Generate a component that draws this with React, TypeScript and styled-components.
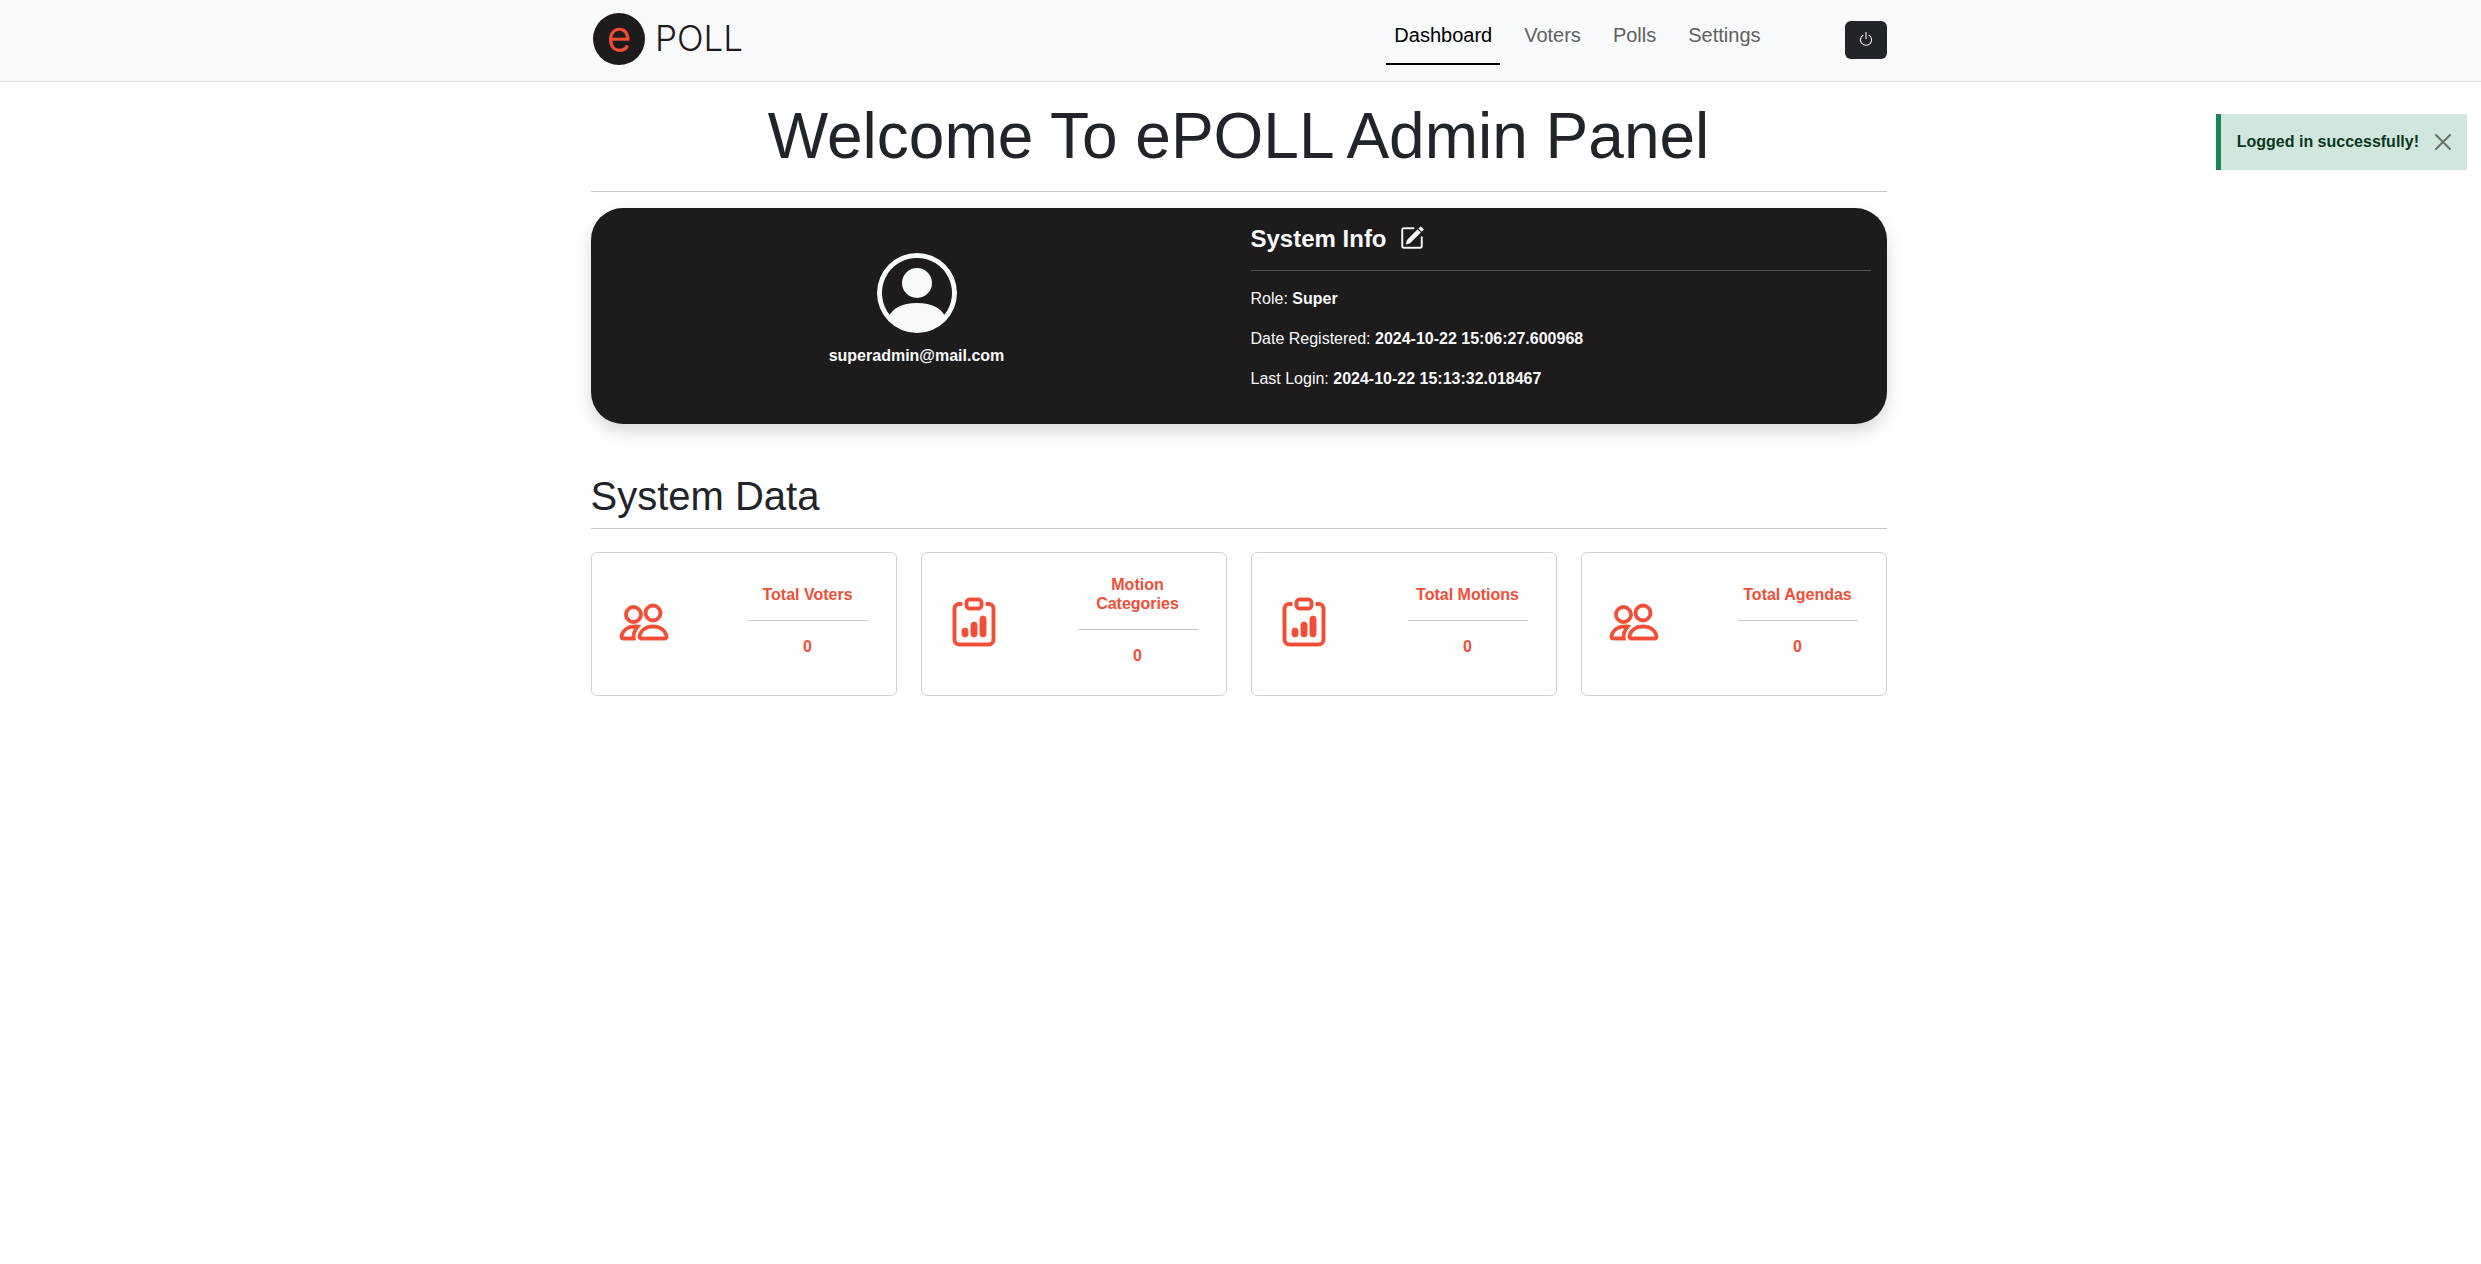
import React from "react";
import styled, { createGlobalStyle } from "styled-components";
import { BsClipboardData, BsPencilSquare, BsPeople, BsPersonCircle, BsPower } from "react-icons/bs";

const GlobalStyle = createGlobalStyle`
  *, *::before, *::after { box-sizing: border-box; }
  body {
    margin: 0;
    background: #fff;
    color: #212529;
    font-family: "Liberation Sans", Arial, sans-serif;
    font-size: 16px;
    line-height: 24px;
  }
  h1, h2, h3, h4, p, ul { margin: 0; padding: 0; }
`;

const Page = styled.div`
  padding-right: 4px;
`;

const Container = styled.div`
  width: 100%;
  max-width: 1320px;
  margin: 0 auto;
  padding: 0 12px;
`;

const Header = styled.header`
  margin-right: -4px;
  padding-right: 4px;
  background: #f8f9fa;
  border-bottom: 1px solid #dee2e6;
`;

const HeaderRow = styled(Container)`
  display: flex;
  align-items: center;
  height: 81px;
  padding-bottom: 1px;
`;

const Brand = styled.a`
  display: flex;
  margin-right: auto;
`;

const Nav = styled.nav`
  display: flex;
  align-items: center;
  gap: 76px;
`;

const NavList = styled.ul`
  display: flex;
  gap: 16px;
  padding-bottom: 3px;
  list-style: none;
`;

const NavLink = styled.a<{ $active?: boolean }>`
  display: block;
  padding: 8px 8px 13px;
  border-bottom: 2px solid ${(p) => (p.$active ? "#000" : "transparent")};
  color: ${(p) => (p.$active ? "#000" : "#606162")};
  font-size: 20px;
  line-height: 30px;
  text-decoration: none;
`;

const PowerButton = styled.button`
  display: flex;
  align-items: center;
  justify-content: center;
  width: 42px;
  height: 38px;
  padding: 0 0 2px;
  border: 0;
  border-radius: 6px;
  background: #212529;
  color: #fff;
  font-size: 16px;
`;

const Rule = styled.hr<{ $tight?: boolean }>`
  width: 100%;
  height: 0;
  margin: ${(p) => (p.$tight ? 8 : 16)}px 0 16px;
  border: 0;
  border-top: 1px solid;
  color: inherit;
  opacity: 0.25;
`;

const Title = styled.h1`
  padding-top: 16px;
  font-size: 64px;
  font-weight: 400;
  line-height: 77px;
  text-align: center;
`;

const Profile = styled.section`
  display: grid;
  grid-template-columns: 1fr 1fr;
  min-height: 216px;
  margin-bottom: 48px;
  border-radius: 32px;
  background: #1e1b1c;
  color: #f8f9fa;
  box-shadow: 0 8px 16px rgba(0, 0, 0, 0.15);
`;

const Identity = styled.div`
  display: flex;
  flex-direction: column;
  align-items: center;
  justify-content: center;
  gap: 11px;
  padding: 0 4px 11px 8px;
  font-weight: 700;
`;

const Info = styled.div`
  padding: 16px 16px 16px 12px;
`;

const InfoTitle = styled.h2`
  display: flex;
  align-items: center;
  gap: 13px;
  padding-bottom: 1px;
  font-size: 24px;
  line-height: 29px;
`;

const IconButton = styled.button`
  display: flex;
  padding: 0 0 2px;
  border: 0;
  background: none;
  color: inherit;
  font-size: 24px;

  svg { stroke: currentColor; stroke-width: 0.3px; }
`;

const InfoLine = styled.p`
  margin-bottom: 16px;
`;

const SectionTitle = styled.h2`
  font-size: 40px;
  font-weight: 400;
  line-height: 48px;
`;

const Stats = styled.div`
  display: grid;
  grid-template-columns: repeat(4, 1fr);
  gap: 24px;
  margin-top: 23px;
`;

const StatCard = styled.article`
  display: grid;
  grid-template-columns: 1fr 1fr;
  align-items: center;
  gap: 8px;
  min-height: 144px;
  padding: 0 28px;
  border: 1px solid rgba(0, 0, 0, 0.176);
  border-radius: 6px;
  color: #f04e36;
  font-weight: 700;
  line-height: 19px;
  text-align: center;
`;

const StatIcon = styled.div`
  display: flex;
  padding-bottom: 4px;
  font-size: 48px;

  svg { overflow: visible; stroke: currentColor; stroke-width: 0.3px; }
`;

const StatName = styled.h3`
  font-size: 16px;
`;

const StatRule = styled(Rule)`
  color: #212529;
`;

const StatValue = styled.p`
  margin-bottom: 8px;
`;

const Toast = styled.div`
  position: absolute;
  top: 114px;
  right: 14px;
  display: flex;
  align-items: center;
  gap: 16px;
  padding: 16px;
  border-left: 5px solid #198754;
  background: #d1e7dd;
  color: #0a3622;
  font-weight: 700;
`;

const CloseButton = styled.button`
  display: flex;
  padding: 0;
  border: 0;
  background: none;
  color: #000;
  opacity: 0.5;
`;

const LogoMark = styled.svg`
  overflow: visible;
  font-family: Inter, sans-serif;
  font-weight: 300;
`;

const Logo = () => (
  <LogoMark width="160" height="60" viewBox="0 0 160 60" role="img" aria-label="ePOLL">
    <circle cx="28" cy="29" r="26" fill="#1e1b1c" />
    <text x="28" y="41" textAnchor="middle" fill="#f04e36" stroke="#f04e36" strokeWidth="0.4" fontSize="42">e</text>
    <text x="64" y="41" fill="#1e1b1c" fontSize="35">POLL</text>
  </LogoMark>
);

const links = ["Dashboard", "Voters", "Polls", "Settings"];

const stats = [
  { name: "Total Voters", value: 0, Icon: BsPeople },
  { name: "Motion Categories", value: 0, Icon: BsClipboardData },
  { name: "Total Motions", value: 0, Icon: BsClipboardData },
  { name: "Total Agendas", value: 0, Icon: BsPeople },
];

export default function App() {
  return (
    <Page>
      <GlobalStyle />
      <Header>
        <HeaderRow>
          <Brand href="#"><Logo /></Brand>
          <Nav>
            <NavList>
              {links.map((link, i) => (
                <li key={link}><NavLink href="#" $active={i === 0}>{link}</NavLink></li>
              ))}
            </NavList>
            <PowerButton type="button" aria-label="Log out"><BsPower /></PowerButton>
          </Nav>
        </HeaderRow>
      </Header>

      <Container as="main">
        <Title>Welcome To ePOLL Admin Panel</Title>
        <Rule />
        <Profile>
          <Identity>
            <BsPersonCircle size={80} />
            <p>superadmin@mail.com</p>
          </Identity>
          <Info>
            <InfoTitle>
              System Info
              <IconButton type="button" aria-label="Edit"><BsPencilSquare /></IconButton>
            </InfoTitle>
            <Rule />
            <InfoLine>Role: <strong>Super</strong></InfoLine>
            <InfoLine>Date Registered: <strong>2024-10-22 15:06:27.600968</strong></InfoLine>
            <InfoLine>Last Login: <strong>2024-10-22 15:13:32.018467</strong></InfoLine>
          </Info>
        </Profile>

        <SectionTitle>System Data</SectionTitle>
        <Rule $tight />
        <Stats>
          {stats.map(({ name, value, Icon }) => (
            <StatCard key={name}>
              <StatIcon><Icon /></StatIcon>
              <div>
                <StatName>{name}</StatName>
                <StatRule />
                <StatValue>{value}</StatValue>
              </div>
            </StatCard>
          ))}
        </Stats>
      </Container>

      <Toast role="alert">
        Logged in successfully!
        <CloseButton type="button" aria-label="Close">
          <svg width="16" height="16" viewBox="0 0 16 16" stroke="currentColor" strokeWidth="2" strokeLinecap="round">
            <path d="M1 1l14 14M15 1L1 15" />
          </svg>
        </CloseButton>
      </Toast>
    </Page>
  );
}
